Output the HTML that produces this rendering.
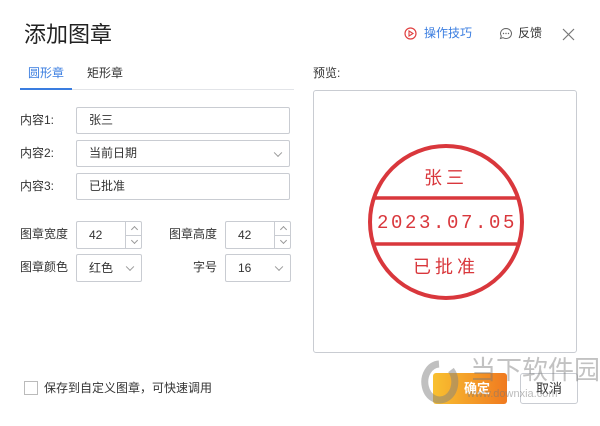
<!DOCTYPE html>
<html><head><meta charset="utf-8"><style>
*{margin:0;padding:0;box-sizing:border-box}
body{width:600px;height:426px;background:#fff;font-family:"Liberation Sans","Noto Sans CJK SC",sans-serif;font-size:12px;line-height:1.2;color:#333;position:relative;overflow:hidden}
.a{position:absolute}
.in{position:absolute;border:1px solid #c9ccd2;border-radius:2px;background:#fff;font-size:12px;color:#333;padding-left:12px;display:flex;align-items:center}
.lbl{position:absolute;font-size:12px;color:#333}
.chev{position:absolute;right:8px;top:50%;width:6px;height:6px;border-right:1px solid #999;border-bottom:1px solid #999;transform:translateY(-70%) rotate(45deg)}
.spin{position:absolute;right:0;top:0;bottom:0;width:16px;border-left:1px solid #c9ccd2}
.spin:after{content:"";position:absolute;left:0;right:0;top:50%;border-top:1px solid #c9ccd2}
.up,.dn{position:absolute;left:6px;width:5px;height:5px;border-left:1px solid #999;border-top:1px solid #999}
.up{top:5px;transform:rotate(45deg)}
.dn{bottom:5px;transform:rotate(225deg)}
</style></head><body>
<div class="a" style="left:24px;top:22px;font-size:22px;color:#222">添加图章</div>
<svg class="a" style="left:404px;top:27px" width="13" height="13"><circle cx="6.5" cy="6.5" r="5.5" fill="none" stroke="#e04040" stroke-width="1.2"/><path d="M5 4 L9 6.5 L5 9Z" fill="none" stroke="#e04040" stroke-width="1.1"/></svg>
<div class="a" style="left:424px;top:26px;font-size:12px;color:#3a7de0">操作技巧</div>
<svg class="a" style="left:499px;top:27px" width="14" height="13"><path d="M7 1.5a5.5 5 0 1 1-3 9.2L1.5 11.5 2.3 9A5.5 5 0 0 1 7 1.5z" fill="none" stroke="#666" stroke-width="1"/><circle cx="4.5" cy="6.5" r=".7" fill="#666"/><circle cx="7" cy="6.5" r=".7" fill="#666"/><circle cx="9.5" cy="6.5" r=".7" fill="#666"/></svg>
<div class="a" style="left:518px;top:26px;font-size:12px;color:#333">反馈</div>
<svg class="a" style="left:562px;top:28px" width="13" height="13"><path d="M1 1L12 12M12 1L1 12" stroke="#777" stroke-width="1.2"/></svg>
<div class="a" style="left:28px;top:66px;color:#3a7de0">圆形章</div>
<div class="a" style="left:87px;top:66px;color:#333">矩形章</div>
<div class="a" style="left:20px;top:89px;width:274px;height:1px;background:#e2e4e8"></div>
<div class="a" style="left:20px;top:88px;width:52px;height:2px;background:#3a7de0"></div>
<div class="lbl" style="left:20px;top:113px">内容1:</div>
<div class="in" style="left:76px;top:107px;width:214px;height:27px">张三</div>
<div class="lbl" style="left:20px;top:146px">内容2:</div>
<div class="in" style="left:76px;top:140px;width:214px;height:27px">当前日期<span class="chev"></span></div>
<div class="lbl" style="left:20px;top:179px">内容3:</div>
<div class="in" style="left:76px;top:173px;width:214px;height:27px">已批准</div>
<div class="lbl" style="left:20px;top:227px">图章宽度</div>
<div class="in" style="left:76px;top:221px;width:66px;height:28px">42<span class="spin"><i class="up"></i><i class="dn"></i></span></div>
<div class="lbl" style="left:169px;top:227px">图章高度</div>
<div class="in" style="left:225px;top:221px;width:66px;height:28px">42<span class="spin"><i class="up"></i><i class="dn"></i></span></div>
<div class="lbl" style="left:20px;top:260px">图章颜色</div>
<div class="in" style="left:76px;top:254px;width:66px;height:28px">红色<span class="chev"></span></div>
<div class="lbl" style="left:193px;top:260px">字号</div>
<div class="in" style="left:225px;top:254px;width:66px;height:28px">16<span class="chev"></span></div>
<div class="a" style="left:313px;top:66px;color:#333">预览:</div>
<div class="a" style="left:313px;top:90px;width:264px;height:263px;border:1px solid #c9ccd2;border-radius:3px"></div>
<svg class="a" style="left:313px;top:90px" width="264" height="263">
<circle cx="133" cy="132" r="76" fill="none" stroke="#d9373c" stroke-width="4"/>
<line x1="62" y1="108" x2="204" y2="108" stroke="#d9373c" stroke-width="3.5"/>
<line x1="62" y1="154" x2="204" y2="154" stroke="#d9373c" stroke-width="3.5"/>
<text x="133" y="94" text-anchor="middle" font-size="18" fill="#d9373c" font-family="Noto Sans CJK SC,sans-serif" letter-spacing="4">张三</text>
<text x="134" y="138" text-anchor="middle" font-size="19" fill="#d9373c" font-family="Liberation Mono,monospace" letter-spacing="2.6">2023.07.05</text>
<text x="133" y="183" text-anchor="middle" font-size="18" fill="#d9373c" font-family="Noto Sans CJK SC,sans-serif" letter-spacing="4">已批准</text>
</svg>
<div class="a" style="left:24px;top:381px;width:14px;height:14px;border:1px solid #bbb"></div>
<div class="a" style="left:44px;top:381px;color:#333">保存到自定义图章，可快速调用</div>
<div class="a" style="left:433px;top:373px;width:74px;height:31px;border-radius:3px;background:linear-gradient(90deg,#f8c030,#f07a20);color:#fff;font-size:13px;font-weight:bold;display:flex;align-items:center;justify-content:center;padding-left:14px">确定</div>
<div class="a" style="left:520px;top:373px;width:58px;height:31px;border:1px solid #c9ccd2;border-radius:3px;color:#333;font-size:13px;display:flex;align-items:center;justify-content:center">取消</div>
<div class="a" style="left:470px;top:355px;font-size:26px;color:rgba(120,120,120,.45)">当下软件园</div>
<div class="a" style="left:467px;top:388px;font-size:11px;color:rgba(120,120,120,.5)">www.downxia.com</div>
<svg class="a" style="left:418px;top:360px" width="42" height="46"><path d="M21 4a15 18 0 1 0 12 6" fill="none" stroke="rgba(130,130,130,.5)" stroke-width="7"/></svg>
</body></html>
